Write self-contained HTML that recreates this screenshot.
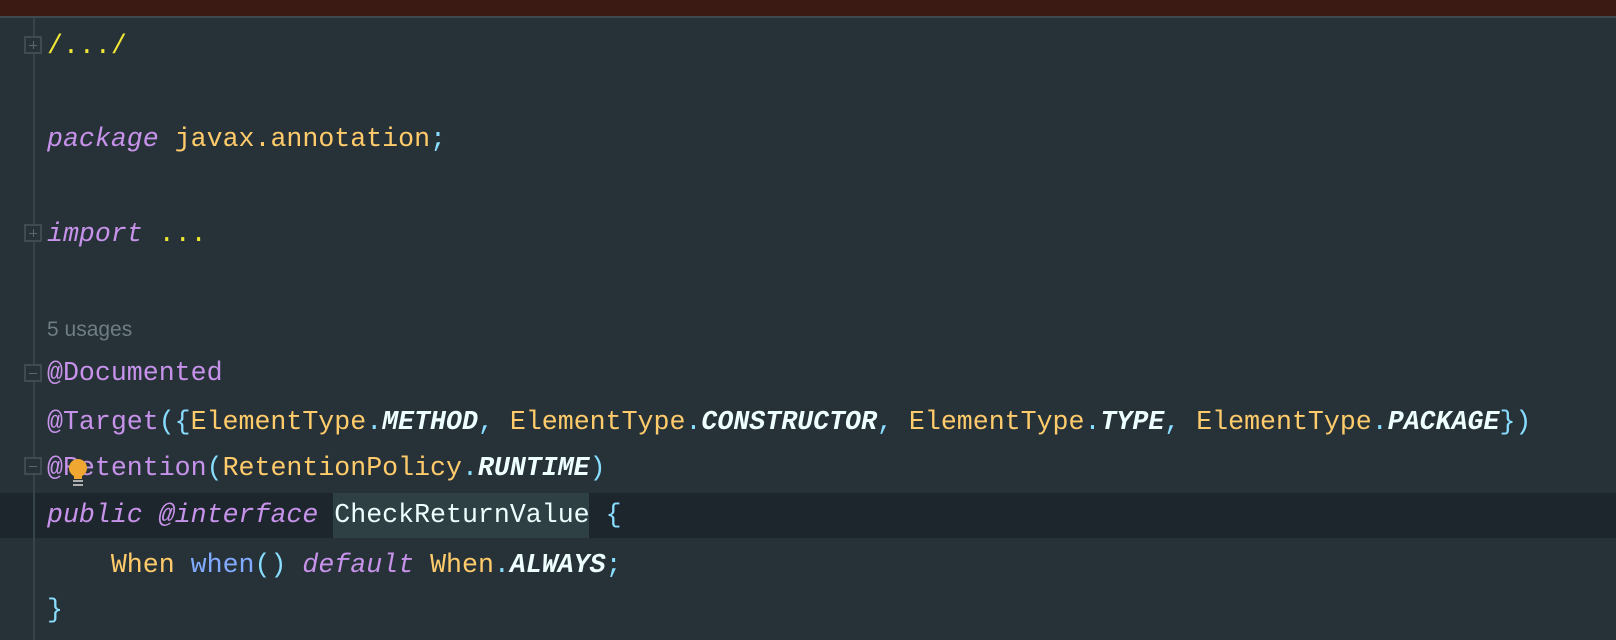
<!DOCTYPE html>
<html><head><meta charset="utf-8"><style>
html,body{margin:0;padding:0;}
body{width:1616px;height:640px;background:#263238;position:relative;overflow:hidden;font-family:"Liberation Mono",monospace;font-size:26.6px;}
.top{position:absolute;left:0;top:0;width:1616px;height:16px;background:#3c1a14;border-bottom:2px solid #3d4a50;}
.gut{position:absolute;left:33px;top:18px;width:2px;height:622px;background:#37434a;}
.cur{position:absolute;left:0;top:493px;width:1616px;height:45px;background:#1e262d;}
.sel{position:absolute;left:333px;top:493px;width:256px;height:45px;background:#2f4044;}
.l{position:absolute;left:47px;white-space:pre;line-height:30px;color:#eeffff;}
.k{color:#c792ea;font-style:italic}
.a{color:#c792ea}
.y{color:#ffcb6b}
.c{color:#89ddff}
.b{color:#82aaff}
.w{color:#eeffff;font-style:italic;font-weight:bold}
.f{color:#f0e634}
.box{position:absolute;width:18px;height:18px;border:2px solid #3e4b52;box-sizing:border-box;background:#263238;}
.box:after{content:"";position:absolute;left:3px;top:7px;width:8px;height:1px;background:#5a666c}
.p:before{content:"";position:absolute;left:7px;top:3px;width:1px;height:8px;background:#5a666c}
.u{position:absolute;left:47px;top:318px;font-family:"Liberation Sans",sans-serif;font-size:21px;color:#6f7d84}
</style></head><body>
<div class="top"></div>
<div class="cur"></div>
<div class="sel"></div>
<div class="gut"></div>
<div class="box p" style="left:24px;top:36px"></div>
<div class="box p" style="left:24px;top:224px"></div>
<div class="box" style="left:24px;top:364px"></div>
<div class="box" style="left:24px;top:457px"></div>
<div class="l f" style="top:31px">/.../</div>
<div class="l" style="top:124px"><span class="k">package</span> <span class="y">javax.annotation</span><span class="c">;</span></div>
<div class="l" style="top:219px"><span class="k">import</span> <span class="f">...</span></div>
<div class="u">5 usages</div>
<div class="l" style="top:358px"><span class="a">@Documented</span></div>
<div class="l" style="top:407px"><span class="a">@Target</span><span class="c">({</span><span class="y">ElementType</span><span class="c">.</span><span class="w">METHOD</span><span class="c">,</span> <span class="y">ElementType</span><span class="c">.</span><span class="w">CONSTRUCTOR</span><span class="c">,</span> <span class="y">ElementType</span><span class="c">.</span><span class="w">TYPE</span><span class="c">,</span> <span class="y">ElementType</span><span class="c">.</span><span class="w">PACKAGE</span><span class="c">})</span></div>
<div class="l" style="top:453px"><span class="a">@Retention</span><span class="c">(</span><span class="y">RetentionPolicy</span><span class="c">.</span><span class="w">RUNTIME</span><span class="c">)</span></div>
<svg style="position:absolute;left:66px;top:458px" width="24" height="32"><circle cx="12" cy="10" r="9" fill="#f0a732"/><rect x="8" y="17" width="8" height="4" fill="#f0a732"/><rect x="7" y="22" width="10" height="2" fill="#b0b0b0"/><rect x="7" y="26" width="10" height="2" fill="#b0b0b0"/></svg>
<div class="l" style="top:500px"><span class="k">public</span> <span class="k">@interface</span> CheckReturnValue <span class="c">{</span></div>
<div class="l" style="top:550px">    <span class="y">When</span> <span class="b">when</span><span class="c">()</span> <span class="k">default</span> <span class="y">When</span><span class="c">.</span><span class="w">ALWAYS</span><span class="c">;</span></div>
<div class="l" style="top:595px"><span class="c">}</span></div>
</body></html>
